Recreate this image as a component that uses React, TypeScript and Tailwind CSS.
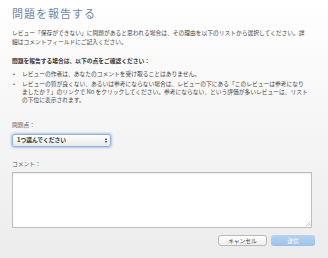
import React from "react";

const font = { fontFamily: '"Noto Sans CJK JP", "Noto Sans", sans-serif' };

export default function App() {
  return (
    <main
      className="w-[328px] h-[258px] overflow-hidden bg-gradient-to-b from-white via-[#f5f5f5] to-[#ececec] text-[#333] px-3 pt-[6px]"
      style={font}
    >
      {/* タイトル */}
      <h1 className="text-[11px] leading-[14px] text-[#6f88aa] tracking-[1px]">問題を報告する</h1>

      {/* 説明 */}
      <p className="mt-[8px] w-[293px] text-[5.75px] leading-[9px] text-[#444]">
        レビュー「保存ができない」に問題があると思われる場合は、その理由を以下のリストから選択してください。詳細はコメントフィールドにご記入ください。
      </p>

      <p className="mt-[10px] text-[5.75px] leading-[9px] font-bold text-[#333]">
        問題を報告する場合は、以下の点をご確認ください：
      </p>

      <ul className="mt-[5px] w-[297px] flex flex-col gap-[2px] text-[5.75px] leading-[8px] text-[#444]">
        <li className="flex">
          <span className="w-[10px] shrink-0 pl-[1px]">•</span>
          <span>レビューの作者は、あなたのコメントを受け取ることはありません。</span>
        </li>
        <li className="flex">
          <span className="w-[10px] shrink-0 pl-[1px]">•</span>
          <span>
            レビューの質が良くない、あるいは参考にならない場合は、レビューの下にある「このレビューは参考になりましたか？」のリンクで No をクリックしてください。参考にならない、という評価が多いレビューは、リストの下位に表示されます。
          </span>
        </li>
      </ul>

      {/* 問題点 */}
      <div className="mt-[17px] text-[5.75px] leading-[8px] text-[#555]">問題点：</div>
      <div className="mt-[5px] w-[99px] h-[13px] rounded-[3px] border border-[#8fb3df] shadow-[0_0_2px_1px_rgba(120,165,225,0.6)] bg-gradient-to-b from-white to-[#e9e9e9] flex items-center justify-between pl-[4px] pr-[3px]">
        <span className="text-[5.75px] font-bold text-[#333]">1つ選んでください</span>
        <span className="flex flex-col items-center leading-none">
          <span className="block w-0 h-0 border-l-[1.5px] border-r-[1.5px] border-b-[2px] border-l-transparent border-r-transparent border-b-[#222]"></span>
          <span className="block mt-[1px] w-0 h-0 border-l-[1.5px] border-r-[1.5px] border-t-[2px] border-l-transparent border-r-transparent border-t-[#222]"></span>
        </span>
      </div>

      {/* コメント */}
      <div className="mt-[13px] text-[5.75px] leading-[8px] text-[#555]">コメント：</div>
      <div className="mt-[4px] relative w-[300px] h-[56px] bg-white border border-[#bdbdbd] shadow-[inset_0_1px_1px_rgba(0,0,0,0.08)]">
        <svg className="absolute right-[1px] bottom-[1px]" width="5" height="5" viewBox="0 0 5 5">
          <path d="M5 1 L1 5 M5 3 L3 5" stroke="#aaa" strokeWidth="0.6" />
        </svg>
      </div>

      {/* ボタン */}
      <div className="mt-[7px] flex justify-end gap-[4px] w-[303px]">
        <button className="w-[49px] h-[11px] rounded-[3px] border border-[#b9b9b9] bg-gradient-to-b from-white to-[#eeeeee] text-[5.75px] leading-none text-[#444]">
          キャンセル
        </button>
        <button className="w-[44px] h-[11px] rounded-[3px] bg-gradient-to-b from-[#b6d3f1] to-[#9cc2ea] text-[5.75px] leading-none text-white">
          送信
        </button>
      </div>
    </main>
  );
}
